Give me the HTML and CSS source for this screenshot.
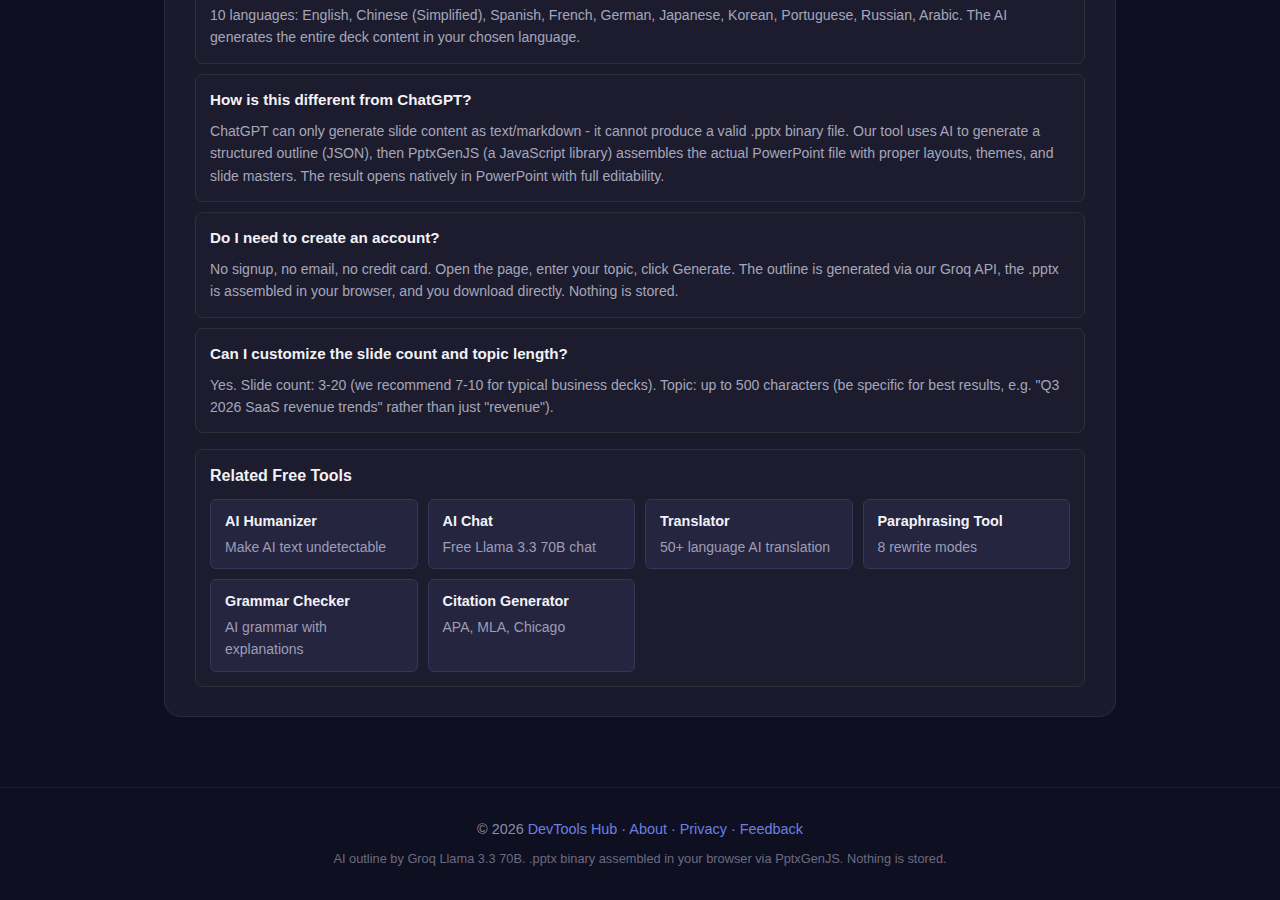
FILE: index.html
```html
<!DOCTYPE html>
<html lang="en">
<head>
  <meta charset="UTF-8" />
  <meta name="viewport" content="width=device-width, initial-scale=1.0"/>
  <title>AI PowerPoint Generator - Free PPTX Maker</title>
  <link rel="stylesheet" href="styles.css">
</head>
<body>

  <main class="panel">

    <div class="faq">
      <h4>Which languages are supported?</h4>
      <p>10 languages: English, Chinese (Simplified), Spanish, French, German, Japanese, Korean, Portuguese, Russian, Arabic. The AI generates the entire deck content in your chosen language.</p>
    </div>

    <div class="faq">
      <h4>How is this different from ChatGPT?</h4>
      <p>ChatGPT can only generate slide content as text/markdown - it cannot produce a valid .pptx binary file. Our tool uses AI to generate a structured outline (JSON), then PptxGenJS (a JavaScript library) assembles the actual PowerPoint file with proper layouts, themes, and slide masters. The result opens natively in PowerPoint with full editability.</p>
    </div>

    <div class="faq">
      <h4>Do I need to create an account?</h4>
      <p>No signup, no email, no credit card. Open the page, enter your topic, click Generate. The outline is generated via our Groq API, the .pptx is assembled in your browser, and you download directly. Nothing is stored.</p>
    </div>

    <div class="faq">
      <h4>Can I customize the slide count and topic length?</h4>
      <p>Yes. Slide count: 3-20 (we recommend 7-10 for typical business decks). Topic: up to 500 characters (be specific for best results, e.g. "Q3 2026 SaaS revenue trends" rather than just "revenue").</p>
    </div>

    <section class="related">
      <h3>Related Free Tools</h3>
      <div class="tools">
        <a class="tool" href="#">
          <strong>AI Humanizer</strong>
          <span>Make AI text undetectable</span>
        </a>
        <a class="tool" href="#">
          <strong>AI Chat</strong>
          <span>Free Llama 3.3 70B chat</span>
        </a>
        <a class="tool" href="#">
          <strong>Translator</strong>
          <span>50+ language AI translation</span>
        </a>
        <a class="tool" href="#">
          <strong>Paraphrasing Tool</strong>
          <span>8 rewrite modes</span>
        </a>
        <a class="tool" href="#">
          <strong>Grammar Checker</strong>
          <span>AI grammar with explanations</span>
        </a>
        <a class="tool" href="#">
          <strong>Citation Generator</strong>
          <span>APA, MLA, Chicago</span>
        </a>
      </div>
    </section>

  </main>

  <footer class="site-footer">
    <p class="links">&copy; 2026 <a href="#">DevTools Hub</a> &middot; <a href="#">About</a> &middot; <a href="#">Privacy</a> &middot; <a href="#">Feedback</a></p>
    <p class="note">AI outline by Groq Llama 3.3 70B. .pptx binary assembled in your browser via PptxGenJS. Nothing is stored.</p>
  </footer>

</body>
</html>
```

FILE: styles.css
```css
*, *::before, *::after {
  box-sizing: border-box;
}

* {
  margin: 0;
}

body {
  background: #0f0f22;
  color: #e8e8f0;
  font-family: 'Liberation Sans', Arial, sans-serif;
  font-size: 14px;
  line-height: 1.6;
  -webkit-font-smoothing: antialiased;
}

a { text-decoration: none; }

/* main card - page is shown scrolled, so the top sits above the fold */
.panel {
  max-width: 952px;
  margin: -73px auto 0;
  padding: 30px 30px 29px;
  background: #1a1a2d;
  border: 1px solid #2a2a3e;
  border-radius: 16px;
}

.faq {
  background: #1c1c2e;
  border: 1px solid #302f38;
  border-radius: 8px;
  padding: 14px;
  margin-bottom: 10px;
}
.faq h4 {
  font-size: 0.95rem;
  line-height: 22px;
  font-weight: 700;
  color: #f2f2f7;
  margin-bottom: 9px;
}
.faq p {
  color: #a6a6ba;
  font-size: 0.88rem;
  line-height: 22.4px;
}
.faq:last-of-type { padding-bottom: 13px; }

.related {
  margin-top: 16px;
  background: #1c1c2e;
  border: 1px solid #302f38;
  border-radius: 8px;
  padding: 14px;
}
.related h3 {
  font-size: 16px;
  line-height: 24px;
  font-weight: 700;
  color: #f2f2f7;
  margin-bottom: 11px;
}

.tools {
  display: grid;
  grid-template-columns: repeat(4, 1fr);
  gap: 10px;
}
.tool {
  display: flex;
  flex-direction: column;
  background: #252540;
  border: 1px solid #363656;
  border-radius: 6px;
  padding: 12px 14px 10px;
}
.tool strong {
  color: #f2f2f7;
  font-size: 0.9rem;
  line-height: 18px;
  margin-bottom: 6px;
}
.tool span {
  color: #9d9db6;
  line-height: 22.4px;
}

.site-footer {
  margin-top: 70px;
  border-top: 1px solid #1f1f3a;
  padding: 30px 20px 32px;
  text-align: center;
}
.site-footer .links {
  color: #8c8ca2;
  font-size: 0.9rem;
  line-height: 22px;
}
.site-footer .links a { color: #6c7fe0; }
.site-footer .note {
  margin-top: 9px;
  color: #6b6b80;
  font-size: 0.8rem;
  line-height: 19px;
}
```
